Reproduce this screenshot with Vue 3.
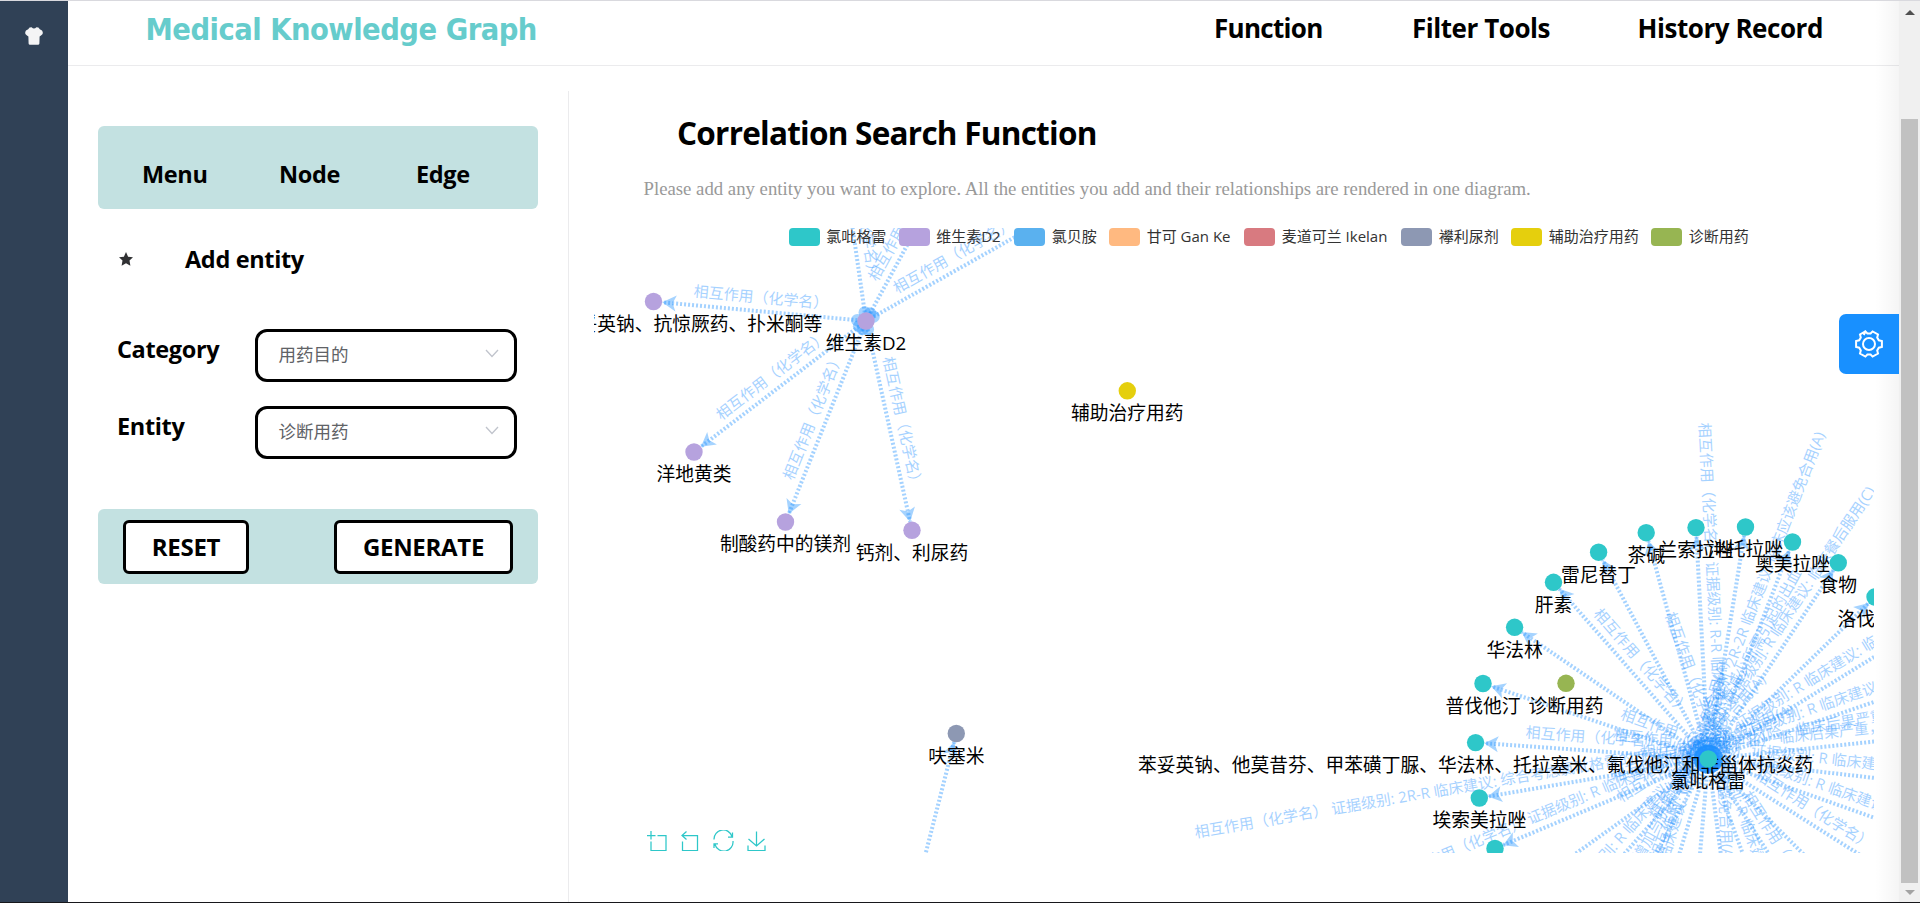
<script setup>
const navItems = [
  { label: 'Function', cls: 'nav-function' },
  { label: 'Filter Tools', cls: 'nav-filter' },
  { label: 'History Record', cls: 'nav-history' },
]
const tabs = ['Menu', 'Node', 'Edge']

const legend = [
  { name: '氯吡格雷', color: '#2ec7c9', w: 110 },
  { name: '维生素D2', color: '#b6a2de', w: 115.5 },
  { name: '氯贝胺', color: '#5ab1ef', w: 95 },
  { name: '甘可 Gan Ke', color: '#ffb980', w: 135 },
  { name: '麦道可兰 Ikelan', color: '#d87a80', w: 157 },
  { name: '襻利尿剂', color: '#8d98b3', w: 110 },
  { name: '辅助治疗用药', color: '#e5cf0d', w: 140 },
  { name: '诊断用药', color: '#97b552', w: 100 },
]

// Graph coordinates are relative to the chart's top-left corner.
const OX = 594
const OY = 228
const NODE_R = 8.7
const teal = '#2ec7c9'
const purple = '#b6a2de'

const short = '相互作用（化学名）'
const avoid = '相互作用（化学名） 证据级别: R 临床建议: 临床应该避免合用(A)'

const hub = { x: 1708.3, y: 759, color: teal, label: '氯吡格雷' }
const vit = { x: 866, y: 321, color: purple, label: '维生素D2' }

const ring = (deg) => ({
  x: hub.x + 231.5 * Math.cos((deg * Math.PI) / 180),
  y: hub.y + 231.5 * Math.sin((deg * Math.PI) / 180),
  color: teal,
  label: '',
})

const links = [
  [vit, { x: 653.5, y: 301.5, color: purple, label: '巴比妥、苯妥英钠、抗惊厥药、扑米酮等' }, short],
  [vit, { x: 694, y: 452, color: purple, label: '洋地黄类' }, short],
  [vit, { x: 785.5, y: 522, color: purple, label: '制酸药中的镁剂' }, short],
  [vit, { x: 912, y: 530.3, color: purple, label: '钙剂、利尿药' }, short],
  [vit, { x: 1054, y: 215, color: purple, label: '' }, short],
  [vit, { x: 968, y: 133, color: purple, label: '' }, short],
  [vit, { x: 835, y: 106, color: purple, label: '' }, short],
  [{ x: 903, y: 942, color: '#8d98b3', label: '' }, { x: 956.3, y: 733.5, color: '#8d98b3', label: '呋塞米' }, ''],
  [hub, { x: 1646.2, y: 532.7, color: teal, label: '茶碱' }, ''],
  [hub, { x: 1696, y: 527.6, color: teal, label: '兰索拉唑' }, '相互作用（化学名） 证据级别: R-R 临床建议: 临床应该避免合用(A)'],
  [hub, { x: 1745.5, y: 527, color: teal, label: '泮托拉唑' }, ''],
  [hub, { x: 1792.5, y: 542, color: teal, label: '奥美拉唑' }, '相互作用（化学名） 证据级别: 2R-2R 临床建议: 临床应该避免合用(A)'],
  [hub, { x: 1838.3, y: 562.8, color: teal, label: '食物' }, '相互作用（化学名） 证据级别: R 临床建议: 临床餐后服用(C)'],
  [hub, { x: 1875, y: 597, color: teal, label: '洛伐他汀' }, ''],
  [hub, ring(-31.6), avoid],
  [hub, ring(-19), avoid],
  [hub, ring(-6), '相互作用（化学名） 临床后果严重，临床应该避免合用'],
  [hub, ring(6.5), avoid],
  [hub, ring(19.5), avoid],
  [hub, ring(32.3), short],
  [hub, ring(45), ''],
  [hub, ring(57.5), short],
  [hub, ring(70), '相互作用（化学名） 证据级别: R 临床建议: 应该避免临床合用或者间隔12小时(A)'],
  [hub, ring(82.5), ''],
  [hub, ring(95), ''],
  [hub, ring(107), avoid],
  [hub, ring(119), '相互作用（化学名） 证据级别: R 临床建议: 可能增加与抗凝药物合用时血小板减少所需引起的出血'],
  [hub, ring(131.5), avoid],
  [hub, ring(144.5), ''],
  [hub, { x: 1495, y: 848.5, color: teal, label: '' }, avoid],
  [hub, { x: 1479.3, y: 798, color: teal, label: '埃索美拉唑' }, '相互作用（化学名） 证据级别: 2R-R 临床建议: 综合考虑氯吡格雷的疗效与合用药物的风险，临床后果严重，应该避免合用'],
  [hub, { x: 1475.6, y: 742.6, color: teal, label: '苯妥英钠、他莫昔芬、甲苯磺丁脲、华法林、托拉塞米、氟伐他汀和非甾体抗炎药' }, short],
  [hub, { x: 1483, y: 683.5, color: teal, label: '普伐他汀' }, ''],
  [hub, { x: 1514.6, y: 627.3, color: teal, label: '华法林' }, ''],
  [hub, { x: 1553.5, y: 582.3, color: teal, label: '肝素' }, short],
  [hub, { x: 1598.6, y: 552.2, color: teal, label: '雷尼替丁' }, ''],
]

const edges = links.map(([s, t, text]) => {
  const a = Math.atan2(t.y - s.y, t.x - s.x)
  const c = Math.cos(a)
  const n = Math.sin(a)
  let deg = (a * 180) / Math.PI
  const heading = deg
  if (deg > 90) deg -= 180
  if (deg < -90) deg += 180
  const mx = (s.x + t.x) / 2 - OX
  const my = (s.y + t.y) / 2 - OY
  return {
    text,
    x1: s.x + NODE_R * c - OX,
    y1: s.y + NODE_R * n - OY,
    x2: t.x - NODE_R * c - OX,
    y2: t.y - NODE_R * n - OY,
    arrow: `translate(${t.x - NODE_R * c - OX} ${t.y - NODE_R * n - OY}) rotate(${heading})`,
    label: `translate(${mx} ${my}) rotate(${deg})`,
  }
})

const nodes = [
  ...links.map((l) => l[1]),
  hub,
  vit,
  { x: 1127.3, y: 390.8, color: '#e5cf0d', label: '辅助治疗用药' },
  { x: 1566, y: 683.3, color: '#97b552', label: '诊断用药' },
].map((p) => ({ ...p, x: p.x - OX, y: p.y - OY }))
</script>

<template>
  <div class="page">
    <aside class="sidebar">
      <svg class="shirt" viewBox="0 0 18 18" width="18" height="18">
        <path d="M4.6 0.4 L6.6 0.2 Q9 2.6 11.4 0.2 L13.4 0.4 Q14.4 2.6 17 3.4 Q18.4 5.6 17.4 7.2 Q16 8.8 14.6 9.4 L14.4 16.6 Q14.3 17.8 13 17.8 L5 17.8 Q3.7 17.8 3.6 16.6 L3.4 9.4 Q2 8.8 0.6 7.2 Q-0.4 5.6 1 3.4 Q3.6 2.6 4.6 0.4Z" fill="#f4f4f5" />
      </svg>
    </aside>

    <div class="content">
      <header class="header">
        <h1 class="brand">Medical Knowledge Graph</h1>
        <nav class="nav">
          <span v-for="item in navItems" :key="item.label" :class="item.cls">{{ item.label }}</span>
        </nav>
      </header>

      <div class="body">
        <section class="controls">
          <div class="tabs">
            <span v-for="tab in tabs" :key="tab">{{ tab }}</span>
          </div>
          <div class="add">
            <svg viewBox="0 0 14 14" width="14" height="14">
              <path d="M7 0 L9.1 4.7 L14 5.2 L10.5 8.6 L11.4 13.7 L7 11.3 L2.6 13.7 L3.5 8.6 L0 5.2 L4.9 4.7Z" fill="#303133" />
            </svg>
            <span>Add entity</span>
          </div>
          <div class="field field-category">
            <label class="category">Category</label>
            <div class="select">
              <span>用药目的</span>
              <svg viewBox="0 0 14 9" width="14" height="9"><path d="M1 1 L7 7.5 L13 1" /></svg>
            </div>
          </div>
          <div class="field field-entity">
            <label class="entity">Entity</label>
            <div class="select">
              <span>诊断用药</span>
              <svg viewBox="0 0 14 9" width="14" height="9"><path d="M1 1 L7 7.5 L13 1" /></svg>
            </div>
          </div>
          <div class="actions">
            <button class="reset">RESET</button>
            <button class="generate">GENERATE</button>
          </div>
        </section>

        <main class="main">
          <h2 class="title">Correlation Search Function</h2>
          <p class="hint">Please add any entity you want to explore. All the entities you add and their relationships are rendered in one diagram.</p>

          <div class="chart">
            <svg class="graph" width="1280" height="625" viewBox="0 0 1280 625">
              <g class="edges">
                <g v-for="(e, i) in edges" :key="i" opacity="0.4">
                  <line :x1="e.x1" :y1="e.y1" :x2="e.x2" :y2="e.y2" />
                </g>
                <circle v-for="(e, i) in edges" :key="'c' + i" :cx="e.x1" :cy="e.y1" r="6.2" opacity="0.4" />
                <path v-for="(e, i) in edges" :key="'a' + i" :transform="e.arrow" d="M0 0 L-14 -8 L-10.5 0 L-14 8Z" opacity="0.4" />
                <text v-for="(e, i) in edges" :key="'t' + i" :transform="e.label" y="-8.5" opacity="0.4">{{ e.text }}</text>
              </g>
              <g v-for="(n, i) in nodes" :key="i" class="node">
                <circle :cx="n.x" :cy="n.y" r="8.7" :fill="n.color" />
                <text :x="n.x" :y="n.y + 29.4">{{ n.label }}</text>
              </g>
            </svg>

            <ul class="legend">
              <li v-for="item in legend" :key="item.name" :style="{ width: item.w + 'px' }">
                <i :style="{ background: item.color }"></i>{{ item.name }}
              </li>
            </ul>

            <div class="toolbox">
              <svg width="20" height="20" viewBox="0 0 20 20"><path d="M0 4.5 H8.5 M4 0 V8.5 M10.5 4.5 H19 V19.5 H4 V10.5" /></svg>
              <svg class="t2" width="18" height="20" viewBox="0 0 18 20"><path d="M5.5 0.5 L1 4.5 L5.5 8.5 M1 4.5 H16.5 V19.5 H1.5 V10.5" /></svg>
              <svg class="t3" width="21" height="21" viewBox="0 0 21 21"><path d="M1 9.5 A9.2 9.2 0 0 1 19 6.5 M20 11 A9.2 9.2 0 0 1 2 14.5 M19.5 2.5 V7 H15 M1 18 V13.8 H5" /></svg>
              <svg class="t4" width="19" height="20" viewBox="0 0 19 20"><path d="M9.5 0.5 V14.5 M1.5 8 L9.5 15 L17.5 8 M1 14.5 V19.5 H18 V14.5" /></svg>
            </div>
          </div>
        </main>
      </div>
    </div>

    <div class="shade"></div>
    <div class="settings">
      <svg width="28" height="28" viewBox="-14 -14 28 28">
        <path d="M-5.2 -9 L-3.6 -12.6 L-1.6 -10.6 H1.6 L3.6 -12.6 L9 -9.6 L8.2 -6.4 L9.8 -3.7 L12.9 -3 V3 L9.8 3.7 L8.2 6.4 L9 9.6 L3.6 12.6 L1.6 10.6 H-1.6 L-3.6 12.6 L-9 9.6 L-8.2 6.4 L-9.8 3.7 L-12.9 3 V-3 L-9.8 -3.7 L-8.2 -6.4 L-9 -9.6 L-3.6 -12.6" />
        <circle r="6" />
      </svg>
    </div>

    <div class="scrollbar">
      <i class="up"></i>
      <div class="thumb"></div>
      <i class="down"></i>
    </div>
  </div>
</template>

<style>
body {
  margin: 0;
  overflow: hidden;
}
</style>

<style scoped>
.page {
  position: relative;
  display: flex;
  box-sizing: border-box;
  width: 1920px;
  height: 903px;
  border-top: 1px solid #d9d9de;
  border-bottom: 1px solid #17171b;
  background: #fff;
  overflow: hidden;
  font-family: "Open Sans", "Noto Sans CJK SC", sans-serif;
  color: #000;
}
.sidebar {
  width: 68px;
  flex: none;
  background: #304156;
}
.shirt {
  display: block;
  margin: 26px 0 0 25px;
}
.content {
  width: 1831px;
  flex: none;
}
.header {
  display: flex;
  box-sizing: border-box;
  height: 65px;
  border-bottom: 1px solid #ebebed;
  padding-left: 77.5px;
  white-space: nowrap;
}
.brand {
  margin: 0;
  width: 1068.5px;
  font: bold 30.5px/58px "DejaVu Sans Condensed", "DejaVu Sans", sans-serif;
  letter-spacing: -0.5px;
  color: #66cccc;
}
.nav {
  display: flex;
  font-weight: 700;
  font-size: 26px;
  line-height: 54px;
  letter-spacing: -0.45px;
}
.nav-function {
  width: 198px;
  letter-spacing: -0.7px;
}
.nav-filter { width: 225.5px; }
.body {
  display: flex;
  height: 836px;
}
.controls {
  width: 501px;
  flex: none;
  box-sizing: border-box;
  padding: 35px 30px 0 30px;
  margin-top: 25px;
  border-right: 1px solid #ebebed;
  font-weight: 700;
  font-size: 23.5px;
  letter-spacing: -0.35px;
}
.tabs {
  display: flex;
  height: 83px;
  box-sizing: border-box;
  padding: 32px 0 0 44px;
  border-radius: 6px;
  background: #c3e1e1;
  line-height: 33px;
}
.tabs span {
  flex: none;
  width: 137px;
}
.add {
  display: flex;
  align-items: center;
  gap: 52px;
  height: 34px;
  margin: 33px 0 0 21px;
}
.field {
  display: flex;
  align-items: flex-start;
}
.field label {
  width: 138px;
  padding-left: 19px;
  line-height: 40px;
}
.field-category { margin-top: 53px; height: 77px; }
.field-entity { height: 103px; }
.select {
  display: flex;
  align-items: center;
  justify-content: space-between;
  box-sizing: border-box;
  width: 262px;
  height: 52.5px;
  border: 3px solid #000;
  border-radius: 12px;
  padding: 0 15px 3px 20.5px;
  font-size: 17.5px;
  font-weight: 400;
  letter-spacing: 0;
  color: #606266;
}
.select path {
  fill: none;
  stroke: #c0c4cc;
  stroke-width: 1.3;
}
.actions {
  display: flex;
  justify-content: space-between;
  box-sizing: border-box;
  height: 75px;
  padding: 11px 25px 0;
  border-radius: 6px;
  background: #c3e1e1;
}
.actions button {
  height: 54px;
  padding: 0;
  border: 3px solid #000;
  border-radius: 6px;
  background: #fff;
  color: #000;
  font: 700 24px/46px "Open Sans", sans-serif;
  letter-spacing: -0.3px;
}
.reset { width: 126px; }
.generate { width: 179px; }
.main {
  padding-left: 25px;
}
.title {
  margin: 44px 0 0 83px;
  font-weight: 700;
  font-size: 31.5px;
  line-height: 46px;
  letter-spacing: -0.75px;
  white-space: nowrap;
}
.hint {
  margin: 20px 0 0 49.5px;
  font: 18.75px/26px "Liberation Serif", serif;
  color: #999;
  white-space: nowrap;
}
.chart {
  position: relative;
  width: 1280px;
  height: 625px;
  margin-top: 26px;
}
.graph {
  display: block;
}
.edges {
  fill: #1e90ff;
  font-size: 15px;
  font-weight: 400;
  text-anchor: middle;
}
.edges line {
  stroke: #1e90ff;
  stroke-width: 4;
  stroke-dasharray: 2 2;
}
.node text {
  font-size: 18.75px;
  font-weight: 400;
  text-anchor: middle;
}
.legend {
  position: absolute;
  top: 0;
  left: 194.7px;
  display: flex;
  margin: 0;
  padding: 0;
  list-style: none;
  font-size: 15px;
  font-weight: 400;
  line-height: 16px;
  color: #333;
  white-space: nowrap;
}
.legend li {
  display: flex;
  flex: none;
}
.legend i {
  width: 31.3px;
  height: 17.5px;
  margin-right: 6.2px;
  border-radius: 4px;
}
.toolbox {
  position: absolute;
  left: 53px;
  top: 603px;
  display: flex;
}
.toolbox path {
  fill: none;
  stroke: #2ec7c9;
  stroke-width: 1.25;
}
.t2 { margin-left: 14px; }
.t3 { margin-left: 14px; margin-top: -1px; }
.t4 { margin-left: 13px; }
.shade {
  position: absolute;
  left: 1875px;
  top: 0;
  width: 24px;
  height: 901px;
  background: linear-gradient(to right, rgba(0, 0, 0, 0), rgba(0, 0, 0, 0.04));
}
.settings {
  position: absolute;
  left: 1839px;
  top: 313px;
  display: flex;
  align-items: center;
  justify-content: center;
  width: 60px;
  height: 60px;
  border-radius: 7px 0 0 7px;
  background: #1890ff;
}
.settings path,
.settings circle {
  fill: none;
  stroke: #fff;
  stroke-width: 2;
}
.scrollbar {
  position: relative;
  width: 21px;
  flex: none;
  background: #f0f0f0;
}
.thumb {
  width: 17px;
  height: 764px;
  margin: 118px 0 0 2px;
  background: #c1c1c1;
}
.up,
.down {
  position: absolute;
  left: 5.5px;
  border: 5px solid transparent;
}
.up {
  top: 4px;
  border-bottom-color: #505050;
}
.down {
  top: 889px;
  border-top-color: #a3a3a3;
}
</style>
